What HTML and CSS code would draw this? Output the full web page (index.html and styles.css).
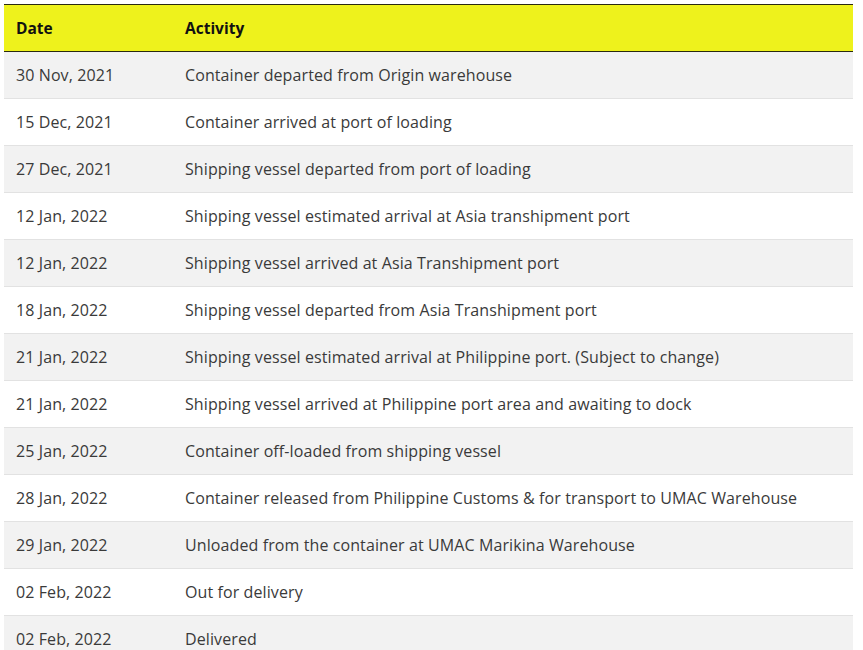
FILE: index.html
```html
<!DOCTYPE html>
<html>
<head>
<meta charset="utf-8">
<link rel="stylesheet" href="styles.css">
</head>
<body>
<table class="track">
  <colgroup><col class="c-date"><col class="c-act"></colgroup>
  <thead>
    <tr><th>Date</th><th>Activity</th></tr>
  </thead>
  <tbody>
    <tr><td>30 Nov, 2021</td><td>Container departed from Origin warehouse</td></tr>
    <tr><td>15 Dec, 2021</td><td>Container arrived at port of loading</td></tr>
    <tr><td>27 Dec, 2021</td><td>Shipping vessel departed from port of loading</td></tr>
    <tr><td>12 Jan, 2022</td><td>Shipping vessel estimated arrival at Asia transhipment port</td></tr>
    <tr><td>12 Jan, 2022</td><td>Shipping vessel arrived at Asia Transhipment port</td></tr>
    <tr><td>18 Jan, 2022</td><td>Shipping vessel departed from Asia Transhipment port</td></tr>
    <tr><td>21 Jan, 2022</td><td>Shipping vessel estimated arrival at Philippine port. (Subject to change)</td></tr>
    <tr><td>21 Jan, 2022</td><td>Shipping vessel arrived at Philippine port area and awaiting to dock</td></tr>
    <tr><td>25 Jan, 2022</td><td>Container off-loaded from shipping vessel</td></tr>
    <tr><td>28 Jan, 2022</td><td>Container released from Philippine Customs &amp; for transport to UMAC Warehouse</td></tr>
    <tr><td>29 Jan, 2022</td><td>Unloaded from the container at UMAC Marikina Warehouse</td></tr>
    <tr><td>02 Feb, 2022</td><td>Out for delivery</td></tr>
    <tr><td>02 Feb, 2022</td><td>Delivered</td></tr>
  </tbody>
</table>
</body>
</html>
```
FILE: styles.css
```css
html, body {
  margin: 0;
  padding: 0;
  background: #ffffff;
}
body {
  padding: 4px 0 0 4px;
  font-family: "Open Sans", "DejaVu Sans", sans-serif;
}
.track {
  width: 849px;
  table-layout: fixed;
  border-collapse: collapse;
  font-size: 16px;
}
.track .c-date {
  width: 169px;
}
.track thead tr {
  background: #eef21c;
  border-top: 1px solid #2a2a10;
  border-bottom: 1px solid #2a2a10;
}
.track th {
  height: 46px;
  padding: 0 0 0 12px;
  text-align: left;
  font-weight: 700;
  color: #111;
  font-size: 15.5px;
}
.track tbody tr {
  border-bottom: 1px solid #e2e2e2;
}
.track tbody tr:nth-child(odd) {
  background: #f2f2f2;
}
.track td {
  height: 46px;
  padding: 0 0 0 12px;
  color: #3a3a3a;
  white-space: nowrap;
  letter-spacing: 0.1px;
}
```
